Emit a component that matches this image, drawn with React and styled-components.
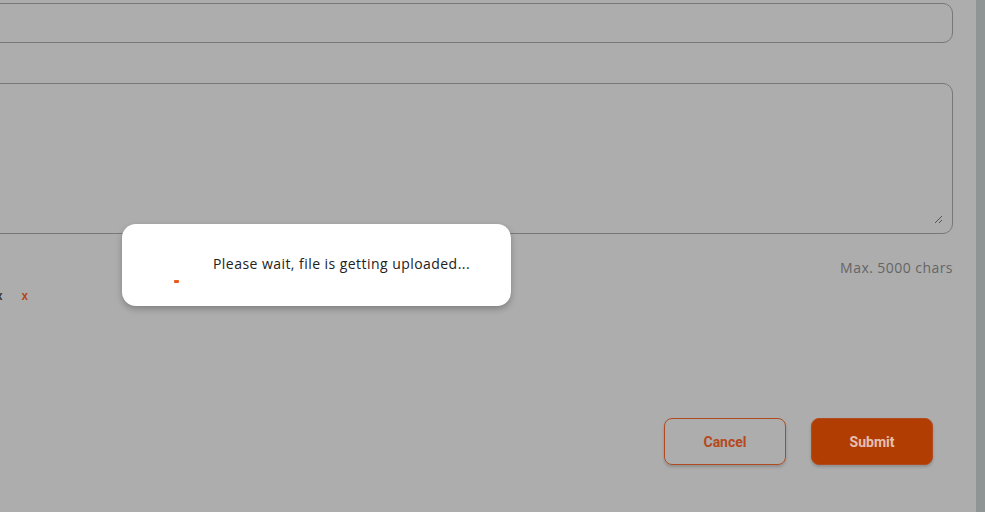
import React from "react";
import styled, { createGlobalStyle } from "styled-components";

const Global = createGlobalStyle`
  html, body { margin: 0; padding: 0; }
  body {
    background: #adadad;
    font-family: "Open Sans", "Noto Sans", sans-serif;
    overflow: hidden;
  }
`;

const Page = styled.div`
  display: flex;
  width: 985px;
  height: 512px;
  position: relative;
  overflow: hidden;
`;

const Main = styled.div`
  flex: 1;
  padding: 3px 23px 0 0;
  margin-left: -30px;
  display: flex;
  flex-direction: column;
`;

const ScrollStrip = styled.div`
  width: 9px;
  background: #8f9494;
`;

const TextInput = styled.div`
  height: 38px;
  border: 1px solid #787878;
  border-radius: 10px;
`;

const TextArea = styled.div`
  position: relative;
  margin-top: 40px;
  height: 149px;
  border: 1px solid #787878;
  border-radius: 10px;
`;

const Grip = styled.svg`
  position: absolute;
  right: 9px;
  bottom: 9px;
`;

const Helper = styled.div`
  display: flex;
  justify-content: flex-end;
  margin-top: 25px;
  font-size: 14px;
  letter-spacing: 0.45px;
  color: #656565;
  line-height: 18px;
`;

const FileRow = styled.div`
  display: flex;
  gap: 19px;
  margin-top: 11px;
  padding-left: 26px;
  font-family: "Roboto", sans-serif;
  font-size: 13px;
  font-weight: 500;
  line-height: 16px;
`;

const X = styled.span`
  color: ${(p) => (p.$accent ? "#b5441a" : "#333")};
`;

const Actions = styled.div`
  display: flex;
  justify-content: flex-end;
  gap: 25px;
  margin-top: 114px;
  padding-right: 20px;
`;

const Button = styled.div`
  width: 122px;
  height: 47px;
  box-sizing: border-box;
  border-radius: 8px;
  display: flex;
  align-items: center;
  justify-content: center;
  font-family: "Roboto", sans-serif;
  font-weight: 700;
  font-size: 14px;
  border: 1px solid #b14b1f;
  background: ${(p) => (p.$primary ? "#b13d02" : "transparent")};
  color: ${(p) => (p.$primary ? "#e6c0b2" : "#b5491d")};
  box-shadow: 0 2px 3px rgba(0, 0, 0, 0.18);
`;

const Modal = styled.div`
  position: absolute;
  left: 122px;
  top: 224px;
  width: 389px;
  height: 82px;
  background: #fff;
  border-radius: 14px;
  box-shadow: 0 3px 6px rgba(0, 0, 0, 0.25);
  display: flex;
  align-items: flex-start;
  padding: 31px 0 0 52px;
  box-sizing: border-box;
`;

const Spinner = styled.div`
  width: 5px;
  height: 3px;
  background: #ec5a1a;
  border-radius: 1px;
  margin-top: 25px;
`;

const Message = styled.div`
  margin-left: 34px;
  font-size: 14px;
  letter-spacing: 0.45px;
  color: #222;
  line-height: 18px;
`;

export default function App() {
  return (
    <Page>
      <Global />
      <Main>
        <TextInput />
        <TextArea>
          <Grip width="9" height="9" viewBox="0 0 9 9">
            <path d="M8 1 L1 8 M8 5 L5 8" stroke="#555" strokeWidth="1" />
          </Grip>
        </TextArea>
        <Helper>Max. 5000 chars</Helper>
        <FileRow>
          <X>x</X>
          <X $accent>x</X>
        </FileRow>
        <Actions>
          <Button>Cancel</Button>
          <Button $primary>Submit</Button>
        </Actions>
      </Main>
      <ScrollStrip />
      <Modal>
        <Spinner />
        <Message>Please wait, file is getting uploaded...</Message>
      </Modal>
    </Page>
  );
}
